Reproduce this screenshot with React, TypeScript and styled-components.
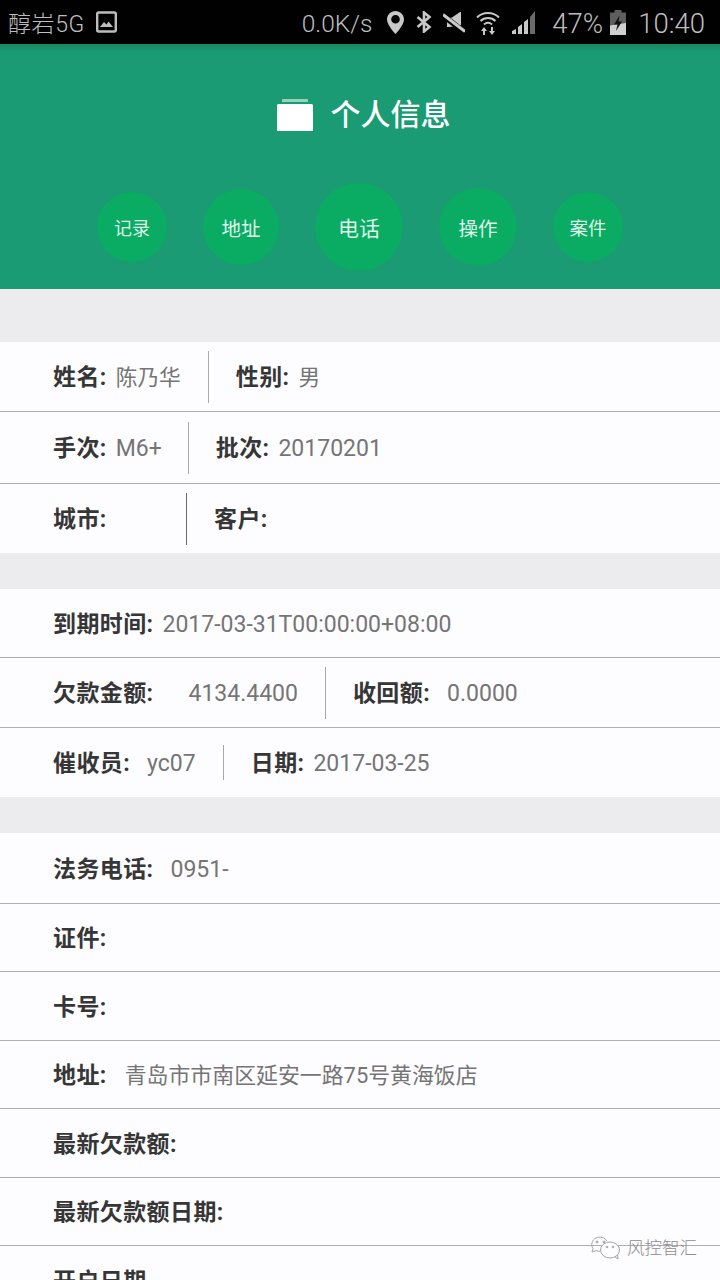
import React from "react";
import styled, { createGlobalStyle } from "styled-components";

const Global = createGlobalStyle`
  html, body { margin: 0; padding: 0; background: #fdfcfe; }
  body { font-family: Roboto, "Noto Sans CJK SC", sans-serif; }
`;

const Page = styled.div`
  position: relative;
  width: 720px;
  height: 1280px;
  overflow: hidden;
  background: #fdfcfe;
`;

const StatusBar = styled.div`
  height: 44px;
  background: #010101;
  display: flex;
  align-items: center;
  padding: 0 15px 0 8px;
  color: #bdbdbd;
  font-weight: 300;
`;

const Carrier = styled.span`
  font-size: 23px;
  width: 88px;
  white-space: nowrap;
  letter-spacing: 0.6px;
`;

const Speed = styled.span`
  font-size: 24.5px;
  margin-left: auto;
  margin-right: 15px;
  margin-top: 2px;
`;

const StatusIcon = styled.svg<{ $mr?: number }>`
  display: block;
  flex: none;
  margin-right: ${(p) => p.$mr ?? 0}px;
`;

const StatusText = styled.span<{ $mr?: number }>`
  font-size: 27.5px;
  margin-top: 2px;
  margin-right: ${(p) => p.$mr ?? 0}px;
`;

const Header = styled.header`
  height: 245px;
  background: linear-gradient(#18885f 0, #1a9b73 8px);
  display: flex;
  flex-direction: column;
  align-items: center;
`;

const TitleRow = styled.div`
  display: flex;
  align-items: center;
  gap: 18px;
  height: 46px;
  margin-top: 48px;
  margin-left: 7px;
`;

const Title = styled.h1`
  margin: 0;
  color: #fff;
  font-size: 30px;
  font-weight: 500;
  line-height: 46px;
`;

const Circles = styled.nav`
  display: flex;
  align-items: center;
  gap: 36px;
  margin-top: 45px;
`;

const Circle = styled.div<{ $d: number; $f: number }>`
  width: ${(p) => p.$d}px;
  height: ${(p) => p.$d}px;
  border-radius: 50%;
  background: #0aab62;
  color: #dff5ea;
  font-size: ${(p) => p.$f}px;
  display: flex;
  align-items: center;
  justify-content: center;
`;

const Gap = styled.div<{ $h: number }>`
  height: ${(p) => p.$h}px;
  background: #ececee;
`;

const Row = styled.div<{ $h: number; $line?: boolean }>`
  box-sizing: border-box;
  height: ${(p) => p.$h}px;
  display: flex;
  align-items: center;
  padding-left: 53px;
  background: #fdfcfe;
  font-size: 23px;
  border-bottom: ${(p) => (p.$line ? "1px solid #aeaeb0" : "none")};
`;

const Field = styled.div<{ $gap?: number; $min?: number }>`
  display: flex;
  align-items: baseline;
  gap: ${(p) => p.$gap ?? 9}px;
  min-width: ${(p) => p.$min ?? 0}px;
  white-space: nowrap;
  line-height: 32px;
  margin-top: 3px;
`;

const Label = styled.span`
  font-weight: 700;
  color: #363636;
  letter-spacing: 0.4px;
`;

const Value = styled.span<{ $size?: number }>`
  color: #757575;
  font-size: ${(p) => p.$size ?? 23}px;
`;

const Divider = styled.div<{ $h?: number; $dark?: boolean; $before?: number }>`
  width: 1px;
  height: ${(p) => p.$h ?? 52}px;
  margin: 0 27px 0 ${(p) => p.$before ?? 27}px;
  background: ${(p) => (p.$dark ? "#6d6d6d" : "#a8a8a8")};
`;

const Watermark = styled.div`
  position: absolute;
  left: 591px;
  top: 1236px;
  display: flex;
  align-items: center;
  gap: 4px;
  color: #8d8d8d;
  font-size: 17.5px;
  font-weight: 300;
  line-height: 24px;
`;

function ImageIcon() {
  return (
    <StatusIcon width="21" height="22" viewBox="0 0 21 22" fill="none">
      <rect x="1.2" y="1.5" width="18.6" height="19" rx="1.5" stroke="#bdbdbd" strokeWidth="2.4" />
      <path d="M4 16l4-5 2.500 2.500 2-3L17 16z" fill="#bdbdbd" />
    </StatusIcon>
  );
}
function PinIcon() {
  return (
    <StatusIcon $mr={12} width="17" height="23" viewBox="0 0 17 23">
      <path fillRule="evenodd" d="M8.500 0C3.800 0 0 3.700 0 8.400 0 14 8.500 23 8.500 23S17 14 17 8.400C17 3.700 13.200 0 8.500 0zm0 4a4.300 4.300 0 1 1 0 8.600 4.300 4.300 0 0 1 0-8.600z" fill="#c8c8c8" />
    </StatusIcon>
  );
}
function BluetoothIcon() {
  return (
    <StatusIcon $mr={11} width="16" height="22" viewBox="0 0 16 22" fill="none">
      <path d="M1.500 6l12 10-5.500 4.500v-19L13.500 6l-12 10" stroke="#c8c8c8" strokeWidth="2.6" />
    </StatusIcon>
  );
}
function MuteIcon() {
  return (
    <StatusIcon $mr={11} width="22" height="21" viewBox="0 0 22 21">
      <path d="M4 6.500L9 5.500 17 0h1v13.500L6 15H4z" fill="#c8c8c8" />
      <path d="M0 3.500l22 17" stroke="#010101" strokeWidth="5.500" />
      <path d="M0 2.500l22 17" stroke="#c8c8c8" strokeWidth="3" />
    </StatusIcon>
  );
}
function WifiIcon() {
  return (
    <StatusIcon $mr={12} width="24" height="25" viewBox="0 0 24 25" fill="none">
      <path d="M1 7.500C7 1.500 17 1.500 23 7.500M4.500 11c4.200-4 10.800-4 15 0M8 14.500c2.400-2 5.600-2 8 0" stroke="#c8c8c8" strokeWidth="2" />
      <path d="M8 17l-3 4h2v4h2v-4h2zM16 25l3-4h-2v-4h-2v4h-2z" fill="#c8c8c8" />
    </StatusIcon>
  );
}
function SignalIcon() {
  return (
    <StatusIcon $mr={17} width="23" height="23" viewBox="0 0 23 23">
      <path d="M0 23v-3l4-2v5zM6 23v-7l4-3v10zM12 23V11l4-3v15z" fill="#c8c8c8" />
      <path d="M18 23V6l5-6v23z" fill="#6a6a6a" />
    </StatusIcon>
  );
}
function BatteryIcon() {
  return (
    <StatusIcon $mr={12} width="16" height="25" viewBox="0 0 16 25">
      <path d="M4.500 0h7v2.500H16V25H0V2.500h4.500z" fill="#5e5e5e" />
      <path d="M0 15.500L16 13v12H0z" fill="#d0d0d0" />
      <path d="M9.500 5.500L4 14.500h3.500L6 21l6-9.500H8.500z" fill="#111" />
    </StatusIcon>
  );
}
function FolderIcon() {
  return (
    <svg width="36" height="32" viewBox="0 0 36 32">
      <path d="M5 3V1Q5 0 6 0h24q1 0 1 1v2z" fill="#fff" opacity=".55" />
      <path d="M1 5h34l1 1v26H0V6z" fill="#fff" />
    </svg>
  );
}
function WechatIcon() {
  return (
    <svg width="32" height="24" viewBox="0 0 32 24" fill="none" stroke="#a5a5a5" strokeWidth="1">
      <path d="M16 5C14 1.500 9 0 5 2 1 4-.5 9 2 12.500l-1 3.500 4-1.500c1.500.7 3 1 4 .9" />
      <ellipse cx="19" cy="14" rx="9.500" ry="8" fill="#fdfcfe" />
      <path d="M24 21l3 2-.5-4" />
      <circle cx="6" cy="6" r="1" fill="#a5a5a5" />
      <circle cx="13" cy="6" r="1" fill="#a5a5a5" />
      <circle cx="16" cy="11" r=".8" fill="#a5a5a5" />
      <circle cx="22" cy="11" r=".8" fill="#a5a5a5" />
    </svg>
  );
}

const circles = [
  { t: "记录", d: 70, f: 18 },
  { t: "地址", d: 76, f: 19.5 },
  { t: "电话", d: 88, f: 21 },
  { t: "操作", d: 78, f: 19.5 },
  { t: "案件", d: 70, f: 18.5 },
];

export default function App() {
  return (
    <Page>
      <Global />
      <StatusBar>
        <Carrier>醇岩5G</Carrier>
        <ImageIcon />
        <Speed>0.0K/s</Speed>
        <PinIcon />
        <BluetoothIcon />
        <MuteIcon />
        <WifiIcon />
        <SignalIcon />
        <StatusText $mr={7}>47%</StatusText>
        <BatteryIcon />
        <StatusText>10:40</StatusText>
      </StatusBar>
      <Header>
        <TitleRow>
          <FolderIcon />
          <Title>个人信息</Title>
        </TitleRow>
        <Circles>
          {circles.map((c) => (
            <Circle key={c.t} $d={c.d} $f={c.f}>
              {c.t}
            </Circle>
          ))}
        </Circles>
      </Header>
      <Gap $h={53} />
      <Row $h={70} $line>
        <Field><Label>姓名:</Label><Value $size={21.7}>陈乃华</Value></Field>
        <Divider />
        <Field><Label>性别:</Label><Value $size={21.7}>男</Value></Field>
      </Row>
      <Row $h={72} $line>
        <Field><Label>手次:</Label><Value>M6+</Value></Field>
        <Divider $before={26} />
        <Field><Label>批次:</Label><Value>20170201</Value></Field>
      </Row>
      <Row $h={69}>
        <Field $min={133}><Label>城市:</Label></Field>
        <Divider $dark $before={0} />
        <Field><Label>客户:</Label></Field>
      </Row>
      <Gap $h={36} />
      <Row $h={69} $line>
        <Field><Label>到期时间:</Label><Value>2017-03-31T00:00:00+08:00</Value></Field>
      </Row>
      <Row $h={70} $line>
        <Field $gap={35}><Label>欠款金额:</Label><Value>4134.4400</Value></Field>
        <Divider />
        <Field $gap={17}><Label>收回额:</Label><Value>0.0000</Value></Field>
      </Row>
      <Row $h={69}>
        <Field $gap={17}><Label>催收员:</Label><Value>yc07</Value></Field>
        <Divider $h={35} />
        <Field><Label>日期:</Label><Value>2017-03-25</Value></Field>
      </Row>
      <Gap $h={36} />
      <Row $h={71} $line>
        <Field $gap={17}><Label>法务电话:</Label><Value>0951-</Value></Field>
      </Row>
      <Row $h={68} $line><Field><Label>证件:</Label></Field></Row>
      <Row $h={69} $line><Field><Label>卡号:</Label></Field></Row>
      <Row $h={68} $line>
        <Field $gap={18}><Label>地址:</Label><Value $size={21.9}>青岛市市南区延安一路75号黄海饭店</Value></Field>
      </Row>
      <Row $h={69} $line><Field><Label>最新欠款额:</Label></Field></Row>
      <Row $h={68} $line><Field><Label>最新欠款额日期:</Label></Field></Row>
      <Row $h={68}><Field><Label>开户日期</Label></Field></Row>
      <Watermark>
        <WechatIcon />
        <span>风控智汇</span>
      </Watermark>
    </Page>
  );
}
